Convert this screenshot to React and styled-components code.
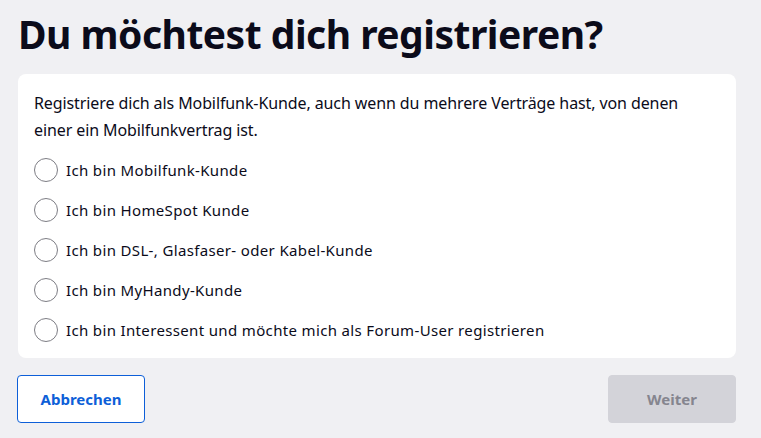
import React from "react";
import styled, { createGlobalStyle } from "styled-components";

const Global = createGlobalStyle`
  html, body { margin: 0; padding: 0; background: #f0f0f3; }
  body { font-family: "Noto Sans", "Open Sans", sans-serif; color: #0b0b1a; }
  * { box-sizing: border-box; }
`;

const Page = styled.div`
  width: 761px;
  height: 438px;
  padding: 8px 25px 0 18px;
  display: flex;
  flex-direction: column;
`;

const Title = styled.h1`
  margin: 0;
  font-size: 39px;
  line-height: 52px;
  font-weight: 700;
  color: #0b0b1a;
  letter-spacing: -0.5px;
`;

const Card = styled.div`
  margin-top: 14px;
  background: #fff;
  border-radius: 8px;
  padding: 16px 16px 8px 16px;
  display: flex;
  flex-direction: column;
`;

const Intro = styled.p`
  margin: 0 0 6px 0;
  font-size: 16px;
  line-height: 27px;
  letter-spacing: -0.1px;
  color: #0b0b1a;
`;

const Option = styled.label`
  display: flex;
  align-items: center;
  gap: 8px;
  height: 40px;
  font-size: 15px;
  letter-spacing: 0.35px;
  color: #0b0b1a;
  cursor: pointer;
`;

const Circle = styled.span`
  width: 24px;
  height: 24px;
  border-radius: 50%;
  border: 1px solid #7d7d84;
  background: #fff;
  flex: none;
`;

const Actions = styled.div`
  margin-top: 17px;
  display: flex;
  justify-content: space-between;
`;

const Button = styled.button`
  width: 128px;
  height: 48px;
  border-radius: 4px;
  font-family: "Noto Sans", "Open Sans", sans-serif;
  font-size: 15px;
  font-weight: 700;
  cursor: pointer;
  border: 1px solid ${(p) => (p.$primary ? "#d3d3d9" : "#0d5fd8")};
  background: ${(p) => (p.$primary ? "#d3d3d9" : "#fff")};
  color: ${(p) => (p.$primary ? "#85858f" : "#0d5fd8")};
`;

const options = [
  "Ich bin Mobilfunk-Kunde",
  "Ich bin HomeSpot Kunde",
  "Ich bin DSL-, Glasfaser- oder Kabel-Kunde",
  "Ich bin MyHandy-Kunde",
  "Ich bin Interessent und möchte mich als Forum-User registrieren",
];

export default function App() {
  return (
    <>
      <Global />
      <Page>
        <Title>Du möchtest dich registrieren?</Title>
        <Card>
          <Intro>
            Registriere dich als Mobilfunk-Kunde, auch wenn du mehrere Verträge hast, von denen
            <br />
            einer ein Mobilfunkvertrag ist.
          </Intro>
          {options.map((o) => (
            <Option key={o}>
              <Circle />
              {o}
            </Option>
          ))}
        </Card>
        <Actions>
          <Button style={{ marginLeft: -1 }}>Abbrechen</Button>
          <Button $primary>Weiter</Button>
        </Actions>
      </Page>
    </>
  );
}
